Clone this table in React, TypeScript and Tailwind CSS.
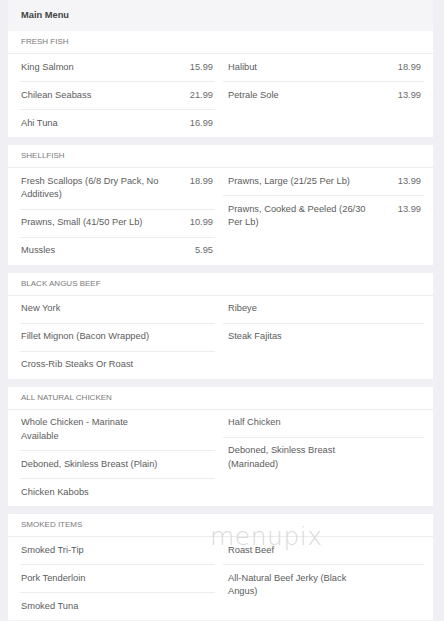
import React from "react";

type Item = { lines: string[]; price?: string };
type Section = { title: string; left: Item[]; right: Item[] };

const sections: Section[] = [
  {
    title: "FRESH FISH",
    left: [
      { lines: ["King Salmon"], price: "15.99" },
      { lines: ["Chilean Seabass"], price: "21.99" },
      { lines: ["Ahi Tuna"], price: "16.99" },
    ],
    right: [
      { lines: ["Halibut"], price: "18.99" },
      { lines: ["Petrale Sole"], price: "13.99" },
    ],
  },
  {
    title: "SHELLFISH",
    left: [
      { lines: ["Fresh Scallops (6/8 Dry Pack, No", "Additives)"], price: "18.99" },
      { lines: ["Prawns, Small (41/50 Per Lb)"], price: "10.99" },
      { lines: ["Mussles"], price: "5.95" },
    ],
    right: [
      { lines: ["Prawns, Large (21/25 Per Lb)"], price: "13.99" },
      { lines: ["Prawns, Cooked & Peeled (26/30", "Per Lb)"], price: "13.99" },
    ],
  },
  {
    title: "BLACK ANGUS BEEF",
    left: [
      { lines: ["New York"] },
      { lines: ["Fillet Mignon (Bacon Wrapped)"] },
      { lines: ["Cross-Rib Steaks Or Roast"] },
    ],
    right: [{ lines: ["Ribeye"] }, { lines: ["Steak Fajitas"] }],
  },
  {
    title: "ALL NATURAL CHICKEN",
    left: [
      { lines: ["Whole Chicken - Marinate", "Available"] },
      { lines: ["Deboned, Skinless Breast (Plain)"] },
      { lines: ["Chicken Kabobs"] },
    ],
    right: [
      { lines: ["Half Chicken"] },
      { lines: ["Deboned, Skinless Breast", "(Marinaded)"] },
    ],
  },
  {
    title: "SMOKED ITEMS",
    left: [
      { lines: ["Smoked Tri-Tip"] },
      { lines: ["Pork Tenderloin"] },
      { lines: ["Smoked Tuna"] },
    ],
    right: [
      { lines: ["Roast Beef"] },
      { lines: ["All-Natural Beef Jerky (Black", "Angus)"] },
    ],
  },
];

function Row({ item, last, side }: { item: Item; last: boolean; side: "l" | "r" }) {
  return (
    <div
      className={
        "flex items-start justify-between py-[6.75px] leading-[13.5px] " +
        (last ? "" : "border-b border-[#ececef] ") +
        (side === "l" ? "pl-[1px] pr-[2px]" : "pl-[5px] pr-[3px]")
      }
    >
      <div className="text-[#5c5c5c]">
        {item.lines.map((l, i) => (
          <div key={i} className="whitespace-nowrap">
            {l}
          </div>
        ))}
      </div>
      {item.price && <div className="text-[#6a6a6a]">{item.price}</div>}
    </div>
  );
}

function Card({ s }: { s: Section }) {
  return (
    <div className="bg-white">
      <div className="h-[23px] border-b border-[#ececef] pl-[13px] flex items-center text-[8px] text-[#7a7a7a]">
        {s.title}
      </div>
      <div className="flex pl-[12px] pr-[9px] gap-[8px]">
        <div className="w-[195px]">
          {s.left.map((it, i) => (
            <Row key={i} item={it} last={i === s.left.length - 1} side="l" />
          ))}
        </div>
        <div className="w-[201px]">
          {s.right.map((it, i) => (
            <Row key={i} item={it} last={i === s.right.length - 1} side="r" />
          ))}
        </div>
      </div>
    </div>
  );
}

export default function App() {
  return (
    <div
      className="relative w-[444px] h-[621px] overflow-hidden bg-[#efeff4] pl-[8px] pr-[11px] text-[9.3px]"
      style={{ fontFamily: '"Liberation Sans", Arial, sans-serif' }}
    >
      <div className="h-[31px] bg-[#f5f5f8] pl-[13px] flex items-center font-bold text-[#444]">
        Main Menu
      </div>
      <div className="flex flex-col gap-[8px]">
        {sections.map((s, i) => (
          <Card key={i} s={s} />
        ))}
      </div>
      <div
        className="absolute left-[210px] top-[518px] text-[25px] font-extralight text-[#dadada] tracking-[0.5px] pointer-events-none"
        style={{ fontFamily: '"DejaVu Sans", sans-serif' }}
      >
        menupix
      </div>
    </div>
  );
}
